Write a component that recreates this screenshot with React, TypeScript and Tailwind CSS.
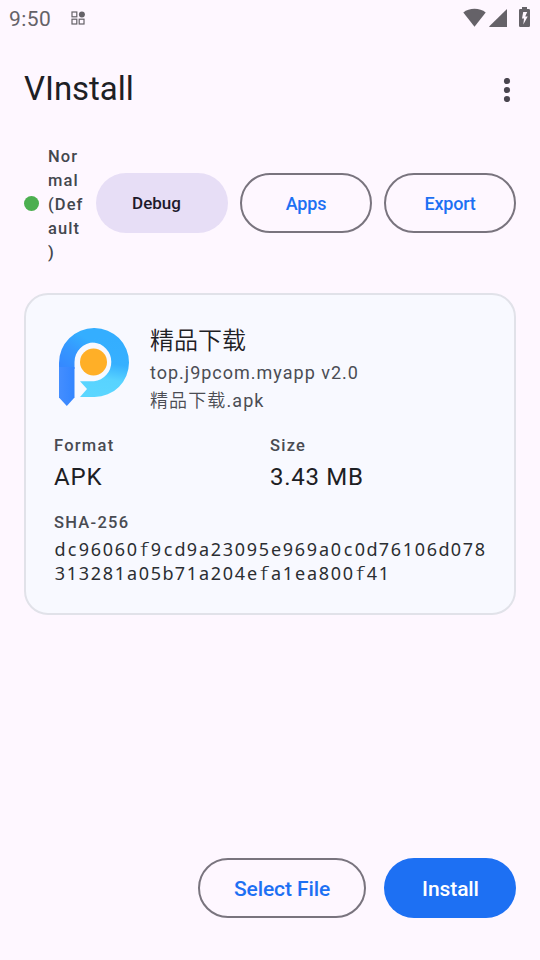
import { useState } from 'react'

const SHA256 = 'dc96060f9cd9a23095e969a0c0d76106d078313281a05b71a204efa1ea800f41'

function StatusBar() {
  return (
    <div className="flex h-9 items-center text-[#656268]">
      <span className="mt-px ml-[9px] w-[62px] text-[21px] leading-9 font-[450] tracking-[0.4px]">9:50</span>
      <svg className="size-[14px]" viewBox="0 0 14 14" fill="none" stroke="currentColor" strokeWidth="1.2">
        <rect x="1" y="1" width="4.8" height="4.8" />
        <rect x="1" y="8.2" width="4.8" height="4.8" />
        <rect x="8.2" y="8.2" width="4.8" height="4.8" />
        <circle cx="10.9" cy="3.4" r="3" fill="currentColor" stroke="none" />
      </svg>
      <svg className="-mt-0.5 ml-auto h-[19px] w-[23px]" viewBox="0 0 23 19" fill="currentColor">
        <path d="M.3 4.4C3.4 2 7.2.8 11.5.8S19.6 2 22.7 4.4L11.5 18.8Z" />
      </svg>
      <svg className="-mt-0.5 ml-[3px] h-[19px] w-[18px]" viewBox="0 0 18 19" fill="currentColor">
        <path d="M18 1V19H1Q-.2 19 .6 18Z" />
      </svg>
      <svg className="-mt-0.5 mr-[10px] ml-3 h-5 w-[11px]" viewBox="0 0 11 20" fill="currentColor">
        <path fillRule="evenodd" d="M3 0h5v2h1.8Q11 2 11 3.3v15.4Q11 20 9.7 20H1.3Q0 20 0 18.7V3.3Q0 2 1.3 2H3ZM4.2 5 3 11.4H5L4.3 17.6 8.7 9.4H6.2L8.2 5Z" />
      </svg>
    </div>
  )
}

function AppIcon() {
  return (
    <svg className="h-[80px] w-[96px] shrink-0" viewBox="0 0 96 80">
      <defs>
        <linearGradient id="stem" x1="0" y1="0" x2="1" y2="0">
          <stop offset="0" stopColor="#448eff" />
          <stop offset="1" stopColor="#3385ff" />
        </linearGradient>
        <linearGradient id="bowl" gradientUnits="userSpaceOnUse" x1="50" y1="10" x2="40" y2="68">
          <stop offset="0" stopColor="#34aeff" />
          <stop offset="0.42" stopColor="#36b0ff" />
          <stop offset="0.7" stopColor="#58d3ff" />
          <stop offset="1" stopColor="#5bd6ff" />
        </linearGradient>
        <linearGradient id="arc" gradientUnits="userSpaceOnUse" x1="8" y1="44" x2="30" y2="10">
          <stop offset="0" stopColor="#3586ff" />
          <stop offset="0.55" stopColor="#3597ff" />
          <stop offset="1" stopColor="#34aeff" />
        </linearGradient>
      </defs>
      <path d="M39.5 1H40.5A34.5 34.5 0 0 1 40.5 70H26L33 62 26 54.3H40A19.5 19.5 0 0 0 39.5 15.5Z" fill="url(#bowl)" />
      <path d="M5 36A35 35 0 0 1 40 1V15.5A19.5 19.5 0 0 0 20.5 35V42H5Z" fill="url(#arc)" />
      <path d="M5 40H20.5V70.5L12.8 79 5 70.5Z" fill="url(#stem)" />
      <circle cx="39.5" cy="35" r="13.5" fill="#ffaf27" />
    </svg>
  )
}

function Label({ children }: { children: string }) {
  return <p className="relative top-px text-[16.5px] leading-6 font-medium tracking-[1.25px] text-[#494b52]">{children}</p>
}

export default function App() {
  const [tab, setTab] = useState('Debug')

  return (
    <div className="flex h-[960px] w-[540px] flex-col bg-[#fef7ff] font-[Roboto,'Noto_Sans_CJK_SC',sans-serif] text-[#1d2024]">
      <StatusBar />

      <header className="flex h-[107px] items-center justify-between pr-[29px] pl-6">
        <h1 className="-mt-0.5 text-[33px] leading-[42px] tracking-[-0.05px]">VInstall</h1>
        <svg className="mt-px h-6 w-2" viewBox="0 0 8 24" fill="#49454f">
          <circle cx="4" cy="3" r="3.1" />
          <circle cx="4" cy="12" r="3.1" />
          <circle cx="4" cy="21" r="3.1" />
        </svg>
      </header>

      <div className="flex h-[120px] items-center gap-3 px-6">
        <div className="mt-px flex w-[60px] items-center gap-[9px]">
          <span className="size-[15px] shrink-0 rounded-full bg-[#4caf50]" />
          <span className="pt-[3px] text-[16.5px] leading-6 font-medium tracking-[1.1px] text-[#43474e]">
            Nor<br />mal<br />(Def<br />ault<br />)
          </span>
        </div>
        {['Debug', 'Apps', 'Export'].map((name) => (
          <button
            key={name}
            type="button"
            onClick={() => setTab(name)}
            className={
              tab === name
                ? 'h-[60px] w-[132px] rounded-full bg-[#e7def6] pt-0.5 pr-[11px] text-[17px] font-medium text-[#1d192b]'
                : 'h-[60px] w-[132px] rounded-full border-2 border-[#79747e] pt-px text-[18px] font-medium tracking-[-0.2px] text-[#1d70f3]'
            }
          >
            {name}
          </button>
        ))}
      </div>

      <section className="mx-6 mt-[30px] h-[322px] rounded-[24px] border-2 border-[#e1e2e9] bg-[#f8f9ff] px-7 pt-7">
        <div className="flex">
          <div className="pt-1">
            <AppIcon />
          </div>
          <div>
            <h2 className="text-[24px] leading-9 font-[350]">精品下载</h2>
            <p className="text-[18px] leading-7 tracking-[1px] text-[#4b4d54]">top.j9pcom.myapp v2.0</p>
            <p className="text-[18px] leading-7 tracking-[1.1px] text-[#4b4d54]">
              <span className="font-[350]">精品下载</span>.apk
            </p>
          </div>
        </div>

        <div className="mt-[18px] grid grid-cols-2">
          <div>
            <Label>Format</Label>
            <p className="mt-0.5 text-[24px] leading-9 tracking-[0.8px]">APK</p>
          </div>
          <div>
            <Label>Size</Label>
            <p className="mt-0.5 text-[24px] leading-9 tracking-[0.7px]">3.43 MB</p>
          </div>
        </div>

        <div className="mt-[15px]">
          <Label>SHA-256</Label>
          <p className="mt-[3px] w-[432px] font-['Noto_Sans',sans-serif] text-[18px] leading-6 text-[#2b2e32]">
            {SHA256.split('').map((c, i) => (
              <span key={i} className={c === 'f' ? 'inline-block w-3 scale-x-[1.35] text-center font-light' : 'inline-block w-3 text-center'}>
                {c}
              </span>
            ))}
          </p>
        </div>
      </section>

      <footer className="mt-auto flex justify-end gap-[18px] px-6 pb-[42px]">
        <button type="button" className="h-[60px] w-[168px] rounded-full border-2 border-[#79747e] pt-[3px] text-[21px] font-medium tracking-[-0.1px] text-[#1d70f3]">
          Select File
        </button>
        <button type="button" className="h-[60px] w-[132px] rounded-full bg-[#1d70f3] pt-[3px] pl-px text-[21px] font-medium tracking-[-0.1px] text-white">
          Install
        </button>
      </footer>
    </div>
  )
}
